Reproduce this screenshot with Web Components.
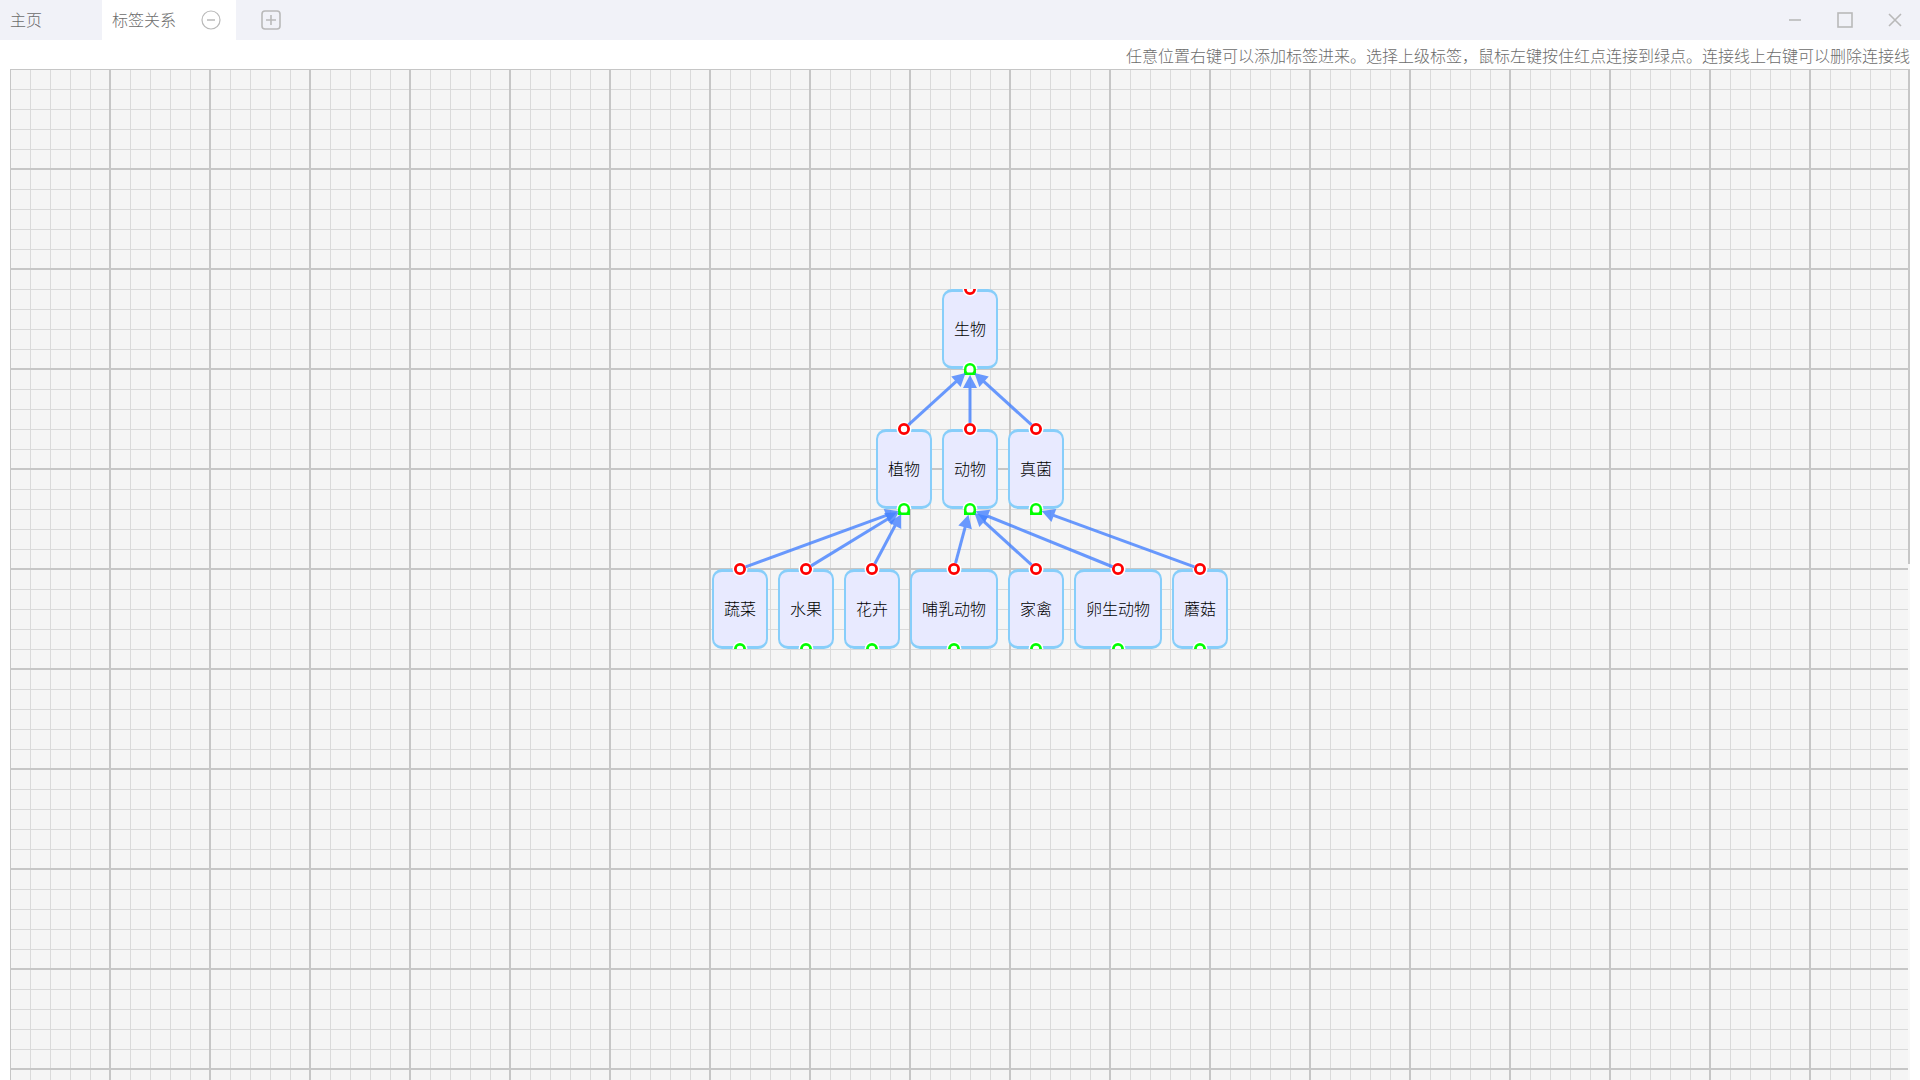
<!DOCTYPE html>
<html lang="zh-CN">
<head>
<meta charset="utf-8">
<title>标签关系</title>
<style>
  body {
    margin: 0;
    font: 300 16px/20px "Noto Sans CJK SC", sans-serif;
    color: #6c6c6c;
  }
</style>
</head>
<body>
<tag-app></tag-app>

<script>
class WindowTab extends HTMLElement {
  constructor() {
    super()
    this.attachShadow({mode: 'open'})
  }

  connectedCallback() {
    this.shadowRoot.innerHTML = this.render()
    const close = this.shadowRoot.querySelector('#close')
    if (close) close.addEventListener('click', () => this.remove())
  }

  render() {
    const close = `
      <button id="close" aria-label="关闭标签页">
        <svg width="20" height="20" fill="none" stroke="#b9b9b9">
          <circle cx="10" cy="10" r="9" stroke-width="1.2"/>
          <path d="M6 10h8" stroke-width="1.5"/>
        </svg>
      </button>`
    return `
      <style>
        :host {
          display: flex;
          align-items: center;
          gap: 25px;
          padding: 0 15px 0 10px;
        }
        :host([active]) {
          background-color: #fff;
        }
        button {
          padding: 0;
          border: 0;
          background: none;
          font: inherit;
          color: inherit;
          cursor: pointer;
        }
        #label {
          padding-bottom: 2px;
        }
        #close, span {
          display: block;
          width: 20px;
          height: 20px;
        }
        svg {
          display: block;
        }
      </style>
      <button id="label" role="tab"><slot></slot></button>
      ${this.hasAttribute('closable') ? close : '<span></span>'}
    `
  }
}

class IconButton extends HTMLElement {
  constructor() {
    super()
    this.attachShadow({mode: 'open'})
  }

  connectedCallback() {
    this.shadowRoot.innerHTML = this.render()
  }

  get icon() {
    switch (this.getAttribute('icon')) {
      case 'add':
        return '<rect x="1" y="1" width="18" height="18" rx="3"/><path d="M5 10h10M10 5v10"/>'
      case 'minimize':
        return '<path d="M4 10h12"/>'
      case 'maximize':
        return '<rect x="3" y="3" width="14" height="14"/>'
      case 'close':
        return '<path d="M4 4l12 12M16 4L4 16"/>'
    }
    return ''
  }

  render() {
    return `
      <style>
        :host {
          display: flex;
        }
        button {
          display: flex;
          align-items: center;
          justify-content: center;
          width: 50px;
          padding: 0;
          border: 0;
          background: none;
          cursor: pointer;
        }
      </style>
      <button aria-label="${this.getAttribute('label')}">
        <svg width="20" height="20" fill="none" stroke="#b9b9b9" stroke-width="1.6">${this.icon}</svg>
      </button>
    `
  }
}

class TitleBar extends HTMLElement {
  constructor() {
    super()
    this.attachShadow({mode: 'open'})
    this.shadowRoot.innerHTML = `
      <style>
        :host {
          display: flex;
          justify-content: space-between;
          height: 40px;
          background-color: #f1f2f8;
        }
        nav, div {
          display: flex;
        }
        nav icon-button {
          padding-left: 10px;
        }
      </style>
      <nav>
        <window-tab>主页</window-tab>
        <window-tab active closable>标签关系</window-tab>
        <icon-button icon="add" label="新建标签页"></icon-button>
      </nav>
      <div>
        <icon-button icon="minimize" label="最小化"></icon-button>
        <icon-button icon="maximize" label="最大化"></icon-button>
        <icon-button icon="close" label="关闭"></icon-button>
      </div>
    `
  }
}

// x, y: centre of the node's top edge on the board
// top / bottom: half | full | linked
class TagNode extends HTMLElement {
  constructor() {
    super()
    this.attachShadow({mode: 'open'})
  }

  connectedCallback() {
    this.style.left = this.getAttribute('x') + 'px'
    this.style.top = this.getAttribute('y') + 'px'
    this.shadowRoot.innerHTML = this.render()
  }

  get topPort() {
    return `
      <svg class="top ${this.getAttribute('top')}" width="16" height="16">
        <circle cx="8" cy="8" r="7.5" fill="#fff"/>
        <circle cx="8" cy="8" r="4.6" fill="#fff" stroke="#f00" stroke-width="2.8"/>
      </svg>`
  }

  get bottomPort() {
    const linked = this.getAttribute('bottom') === 'linked'
    const shape = linked
      ? '<path d="M.5 8a7.5 7.5 0 0 1 15 0z" fill="#fff"/><path d="M2 8a6 6 0 0 1 12 0v6H2z" fill="#0f0"/><path d="M4.5 8a3.5 3.5 0 0 1 7 0v2l-1 1.4h-5l-1-1.4z" fill="#fff"/>'
      : '<circle cx="8" cy="8" r="7.5" fill="#fff"/><circle cx="8" cy="8" r="4.6" stroke="#0f0" fill="#fff" stroke-width="2.8"/>'
    return `<svg class="bottom ${this.getAttribute('bottom')}" width="16" height="16">${shape}</svg>`
  }

  render() {
    return `
      <style>
        :host {
          position: absolute;
          display: flex;
          align-items: center;
          box-sizing: border-box;
          height: 80px;
          padding: 0 10px 2px;
          border: 2px solid #87cefa;
          border-width: 3px 2px;
          border-radius: 10px;
          background-color: #e8eaff;
          color: #000;
          white-space: nowrap;
          transform: translateX(-50%);
        }
        svg {
          position: absolute;
          left: calc(50% - 8px);
        }
        .top {
          top: -11px;
        }
        .bottom {
          bottom: -11px;
        }
        .top.half {
          clip-path: inset(8px 0 0 0);
        }
        .bottom.half {
          clip-path: inset(0 0 8px 0);
        }
      </style>
      <slot></slot>
      ${this.topPort}
      ${this.bottomPort}
    `
  }
}

class TagBoard extends HTMLElement {
  constructor() {
    super()
    this.attachShadow({mode: 'open'})
    this.nodes = [
      {name: '生物', x: 960, y: 220},
      {name: '植物', x: 894, y: 360, parent: '生物'},
      {name: '动物', x: 960, y: 360, parent: '生物'},
      {name: '真菌', x: 1026, y: 360, parent: '生物'},
      {name: '蔬菜', x: 730, y: 500, parent: '植物'},
      {name: '水果', x: 796, y: 500, parent: '植物'},
      {name: '花卉', x: 862, y: 500, parent: '植物'},
      {name: '哺乳动物', x: 944, y: 500, parent: '动物'},
      {name: '家禽', x: 1026, y: 500, parent: '动物'},
      {name: '卵生动物', x: 1108, y: 500, parent: '动物'},
      {name: '蘑菇', x: 1190, y: 500, parent: '真菌'}
    ]
  }

  connectedCallback() {
    this.shadowRoot.innerHTML = this.render()
  }

  // Line from the child's red port up to the parent's green port, ending in an arrow
  renderEdge(node) {
    const parent = this.nodes.find(item => item.name === node.parent)
    const endY = parent.y + 80
    const dx = node.x - parent.x
    const dy = node.y - endY
    const length = Math.hypot(dx, dy)
    const angle = Math.atan2(dy, dx) * 180 / Math.PI
    return `
      <g transform="translate(${parent.x} ${endY}) rotate(${angle})" opacity="0.8">
        <path d="M10 0H${length - 6}" stroke="#4582ff" stroke-width="3"/>
        <path d="M6 0L19 -7V7z" fill="#4582ff"/>
      </g>`
  }

  renderNode(node) {
    const hasChild = this.nodes.some(item => item.parent === node.name)
    return `
      <tag-node
        x="${node.x}"
        y="${node.y}"
        top="${node.parent ? 'full' : 'half'}"
        bottom="${hasChild ? 'linked' : 'half'}"
      >${node.name}</tag-node>`
  }

  render() {
    return `
      <style>
        :host {
          display: block;
          position: relative;
          overflow: hidden;
          background-color: #f5f5f5;
          background-image:
            linear-gradient(90deg, #c6c6c6 1px, transparent 1px 99px, #c6c6c6 99px),
            linear-gradient(#c6c6c6 1px, transparent 1px 99px, #c6c6c6 99px),
            linear-gradient(90deg, #dadada 1px, transparent 1px),
            linear-gradient(#dadada 1px, transparent 1px);
          background-size: 100px 100px, 100px 100px, 20px 20px, 20px 20px;
        }
        .edges {
          position: absolute;
          width: 100%;
          height: 100%;
          pointer-events: none;
        }
      </style>
      ${this.nodes.map(node => this.renderNode(node)).join('')}
      <svg class="edges">${this.nodes.filter(node => node.parent).map(node => this.renderEdge(node)).join('')}</svg>
    `
  }
}

class TagApp extends HTMLElement {
  constructor() {
    super()
    this.attachShadow({mode: 'open'})
    this.shadowRoot.innerHTML = `
      <style>
        :host {
          display: flex;
          flex-direction: column;
          height: 100vh;
          overflow: hidden;
          background-color: #fff;
        }
        p {
          margin: 0;
          padding: 5px 10px 4px;
          text-align: right;
        }
        main {
          flex: 1;
          display: flex;
          padding: 0 10px;
        }
        tag-board {
          flex: 1;
        }
        #track {
          width: 2px;
          background-color: #f8f8f8;
        }
        #thumb {
          height: 49%;
          background-color: #c6c6c6;
        }
      </style>
      <title-bar></title-bar>
      <p>任意位置右键可以添加标签进来。选择上级标签，鼠标左键按住红点连接到绿点。连接线上右键可以删除连接线</p>
      <main>
        <tag-board></tag-board>
        <div id="track"><div id="thumb"></div></div>
      </main>
    `
  }
}

customElements.define('window-tab', WindowTab)
customElements.define('icon-button', IconButton)
customElements.define('title-bar', TitleBar)
customElements.define('tag-node', TagNode)
customElements.define('tag-board', TagBoard)
customElements.define('tag-app', TagApp)
</script>
</body>
</html>
